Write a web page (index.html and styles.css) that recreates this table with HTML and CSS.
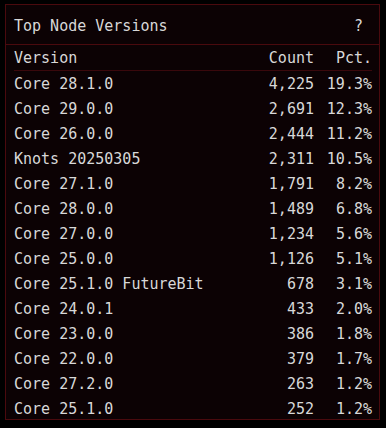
FILE: index.html
```html
<!DOCTYPE html>
<html>
<head>
<meta charset="utf-8">
<link rel="stylesheet" href="styles.css">
</head>
<body>
<div class="panel">
  <div class="panel-head">
    <span class="title">Top Node Versions</span>
    <span class="help">?</span>
  </div>
  <div class="table">
    <div class="row head"><span>Version</span><span class="num">Count</span><span class="num">Pct.</span></div>
    <div class="row"><span>Core 28.1.0</span><span class="num">4,225</span><span class="num">19.3%</span></div>
    <div class="row"><span>Core 29.0.0</span><span class="num">2,691</span><span class="num">12.3%</span></div>
    <div class="row"><span>Core 26.0.0</span><span class="num">2,444</span><span class="num">11.2%</span></div>
    <div class="row"><span>Knots 20250305</span><span class="num">2,311</span><span class="num">10.5%</span></div>
    <div class="row"><span>Core 27.1.0</span><span class="num">1,791</span><span class="num">8.2%</span></div>
    <div class="row"><span>Core 28.0.0</span><span class="num">1,489</span><span class="num">6.8%</span></div>
    <div class="row"><span>Core 27.0.0</span><span class="num">1,234</span><span class="num">5.6%</span></div>
    <div class="row"><span>Core 25.0.0</span><span class="num">1,126</span><span class="num">5.1%</span></div>
    <div class="row"><span>Core 25.1.0 FutureBit</span><span class="num">678</span><span class="num">3.1%</span></div>
    <div class="row"><span>Core 24.0.1</span><span class="num">433</span><span class="num">2.0%</span></div>
    <div class="row"><span>Core 23.0.0</span><span class="num">386</span><span class="num">1.8%</span></div>
    <div class="row"><span>Core 22.0.0</span><span class="num">379</span><span class="num">1.7%</span></div>
    <div class="row"><span>Core 27.2.0</span><span class="num">263</span><span class="num">1.2%</span></div>
    <div class="row"><span>Core 25.1.0</span><span class="num">252</span><span class="num">1.2%</span></div>
  </div>
</div>
</body>
</html>
```
FILE: styles.css
```css
html, body {
  margin: 0;
  background: #000;
}
body {
  padding: 4px 6px 0 5px;
  font-family: "DejaVu Sans Mono", monospace;
  font-size: 15px;
  color: #d8d8d8;
}
.panel {
  border: 1px solid #4a0a0e;
  background: #0c0204;
  height: 414px;
  overflow: hidden;
}
.panel-head {
  box-sizing: border-box;
  height: 40px;
  display: flex;
  align-items: center;
  justify-content: space-between;
  padding: 2px 16px 0 8px;
  border-bottom: 1px solid #4a0a0e;
}
.table {
  padding: 0 7px 0 8px;
}
.row {
  display: grid;
  grid-template-columns: 1fr auto 58px;
  height: 25px;
  align-items: center;
}
.row.head {
  border-bottom: 1px solid #3a080c;
}
.num {
  text-align: right;
}
```
